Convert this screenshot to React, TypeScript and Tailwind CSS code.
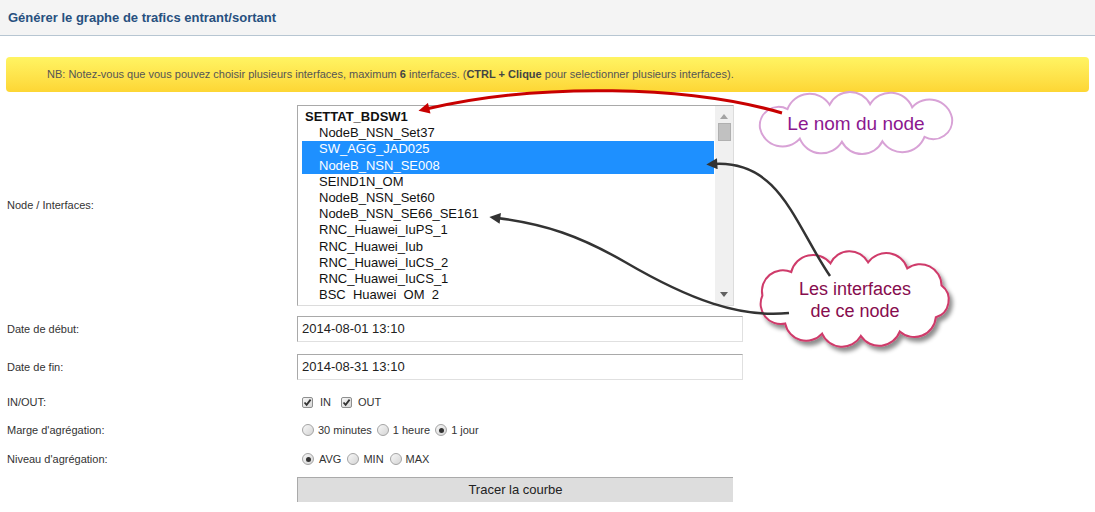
import React from 'react';

const interfaces = [
  'NodeB_NSN_Set37',
  'SW_AGG_JAD025',
  'NodeB_NSN_SE008',
  'SEIND1N_OM',
  'NodeB_NSN_Set60',
  'NodeB_NSN_SE66_SE161',
  'RNC_Huawei_IuPS_1',
  'RNC_Huawei_Iub',
  'RNC_Huawei_IuCS_2',
  'RNC_Huawei_IuCS_1',
  'BSC_Huawei_OM_2',
];
const selected = ['SW_AGG_JAD025', 'NodeB_NSN_SE008'];

// scalloped cloud outline: points spaced evenly along an ellipse, joined by outward arcs
function cloudPath(cx: number, cy: number, rx: number, ry: number, n: number, k: number) {
  const samples: [number, number][] = [];
  const lens = [0];
  for (let i = 0; i <= 400; i++) {
    const a = -Math.PI / 2 + (i / 400) * Math.PI * 2;
    samples.push([cx + rx * Math.cos(a), cy + ry * Math.sin(a)]);
    if (i > 0) {
      const [x0, y0] = samples[i - 1];
      const [x1, y1] = samples[i];
      lens.push(lens[i - 1] + Math.hypot(x1 - x0, y1 - y0));
    }
  }
  const total = lens[lens.length - 1];
  const pts: [number, number][] = [];
  let j = 0;
  for (let i = 0; i < n; i++) {
    const target = (i / n) * total + total / (n * 3);
    while (lens[j] < target) j++;
    pts.push(samples[j]);
  }
  let d = `M ${pts[0][0].toFixed(1)} ${pts[0][1].toFixed(1)}`;
  for (let i = 0; i < n; i++) {
    const a = pts[i];
    const b = pts[(i + 1) % n];
    const r = Math.hypot(b[0] - a[0], b[1] - a[1]) * k;
    d += ` A ${r.toFixed(1)} ${r.toFixed(1)} 0 0 1 ${b[0].toFixed(1)} ${b[1].toFixed(1)}`;
  }
  return d + ' Z';
}

function Check() {
  return (
    <span className="w-[11px] h-[11px] border border-[#8e8f8f] rounded-[2px] bg-gradient-to-br from-[#f6f6f6] to-[#d8d8d8] flex items-center justify-center">
      <svg width="9" height="9" viewBox="0 0 9 9">
        <path d="M1.5 4.5 L3.6 6.8 L7.6 1.6" fill="none" stroke="#333" strokeWidth="1.8" />
      </svg>
    </span>
  );
}

function Radio({ on }: { on?: boolean }) {
  return (
    <span className="w-[12px] h-[12px] rounded-full border border-[#a4a4a4] bg-gradient-to-br from-[#f7f7f7] to-[#d5d5d5] flex items-center justify-center">
      {on && <span className="w-[5px] h-[5px] rounded-full bg-[#333]" />}
    </span>
  );
}

function Row({ label, className, children }: { label: string; className: string; children: React.ReactNode }) {
  return (
    <div className={`flex items-center ${className}`}>
      <div className="w-[297px] pl-[7px] text-[11px] text-[#333]">{label}</div>
      {children}
    </div>
  );
}

export default function App() {
  return (
    <div className="relative w-[1095px] h-[512px] overflow-hidden bg-white font-['Liberation_Sans',Arial,sans-serif]">
      <div className="h-[36px] bg-[#f4f4f4] border-b border-[#b7c6d2] flex items-center pl-[8px]">
        <h1 className="text-[13px] font-bold text-[#27507f]">Générer le graphe de trafics entrant/sortant</h1>
      </div>

      <div className="mx-[6px] mt-[21px] h-[35px] rounded-[4px] bg-gradient-to-b from-[#fff462] to-[#fdd634] flex items-center pl-[41px] text-[11px] text-[#555]">
        <span>
          NB: Notez-vous que vous pouvez choisir plusieurs interfaces, maximum <b className="text-[#444]">6</b> interfaces. (
          <b className="text-[#444]">CTRL + Clique</b> pour selectionner plusieurs interfaces).
        </span>
      </div>

      <Row label="Node / Interfaces:" className="mt-[13px]">
        <div className="w-[437px] h-[201px] border border-[#a9a9a9] border-r-[#dcdcdc] border-b-[#dcdcdc] flex">
          <div className="flex-1 pl-[4px] pr-[1px] pt-[3px]">
            <div className="h-[191px] overflow-hidden text-[13px] text-[#111]">
              <div className="h-[16.2px] leading-[16px] pl-[3px] font-bold">SETTAT_BDSW1</div>
              {interfaces.map((name) => (
                <div
                  key={name}
                  className={`h-[16.2px] leading-[16.2px] pl-[17px] ${selected.includes(name) ? 'bg-[#1e90ff] text-white' : ''}`}
                >
                  {name}
                </div>
              ))}
            </div>
          </div>
          <div className="w-[18px] bg-[#f0f0f0] flex flex-col items-center">
            <svg width="8" height="5" viewBox="0 0 8 5" className="mt-[8px]">
              <path d="M0 5 L4 0 L8 5 Z" fill="#a3a3a3" />
            </svg>
            <div className="mt-[4px] w-[13px] h-[18px] bg-[#c1c1c1] border border-[#b0b0b0]" />
            <div className="flex-1" />
            <svg width="8" height="5" viewBox="0 0 8 5" className="mb-[8px]">
              <path d="M0 0 L8 0 L4 5 Z" fill="#606060" />
            </svg>
          </div>
        </div>
      </Row>

      <Row label="Date de début:" className="mt-[10px]">
        <div className="w-[446px] h-[26px] border border-[#a9a9a9] border-r-[#e0e0e0] border-b-[#e0e0e0] pl-[4px] flex items-center text-[13px] text-[#222]">
          2014-08-01 13:10
        </div>
      </Row>

      <Row label="Date de fin:" className="mt-[12px]">
        <div className="w-[446px] h-[26px] border border-[#a9a9a9] border-r-[#e0e0e0] border-b-[#e0e0e0] pl-[4px] flex items-center text-[13px] text-[#222]">
          2014-08-31 13:10
        </div>
      </Row>

      <Row label="IN/OUT:" className="mt-[11px] h-[22px]">
        <div className="flex items-center pl-[5px] text-[11px] text-[#333]">
          <Check />
          <span className="ml-[7px] mr-[10px]">IN</span>
          <Check />
          <span className="ml-[6px]">OUT</span>
        </div>
      </Row>

      <Row label="Marge d'agrégation:" className="mt-[6px] h-[22px]">
        <div className="flex items-center pl-[5px] text-[11px] text-[#333]">
          <Radio />
          <span className="ml-[4px] mr-[5px]">30 minutes</span>
          <Radio />
          <span className="ml-[4px] mr-[5px]">1 heure</span>
          <Radio on />
          <span className="ml-[4px]">1 jour</span>
        </div>
      </Row>

      <Row label="Niveau d'agrégation:" className="mt-[7px] h-[22px]">
        <div className="flex items-center pl-[5px] text-[11px] text-[#333]">
          <Radio on />
          <span className="ml-[5px] mr-[6px]">AVG</span>
          <Radio />
          <span className="ml-[4px] mr-[6px]">MIN</span>
          <Radio />
          <span className="ml-[4px]">MAX</span>
        </div>
      </Row>

      <div className="flex mt-[7px]">
        <div className="w-[297px]" />
        <button className="w-[436px] h-[25px] bg-[#dddddd] border-t border-l border-[#aaaaaa] text-[13px] text-[#222]">
          Tracer la courbe
        </button>
      </div>

      {/* annotations */}
      <svg className="absolute inset-0 pointer-events-none" width="1095" height="512">
        <defs>
          <filter id="shadow" x="-10%" y="-10%" width="130%" height="140%">
            <feDropShadow dx="3" dy="4" stdDeviation="2" floodColor="#000" floodOpacity="0.45" />
          </filter>
          <marker id="redHead" viewBox="0 0 10 10" refX="3" refY="5" markerWidth="14" markerHeight="11" markerUnits="userSpaceOnUse" orient="auto">
            <path d="M0 0 L10 5 L0 10 Z" fill="#c80000" />
          </marker>
          <marker id="darkHead" viewBox="0 0 10 10" refX="3" refY="5" markerWidth="14" markerHeight="11" markerUnits="userSpaceOnUse" orient="auto">
            <path d="M0 0 L10 5 L0 10 Z" fill="#333" />
          </marker>
        </defs>
        <path d={cloudPath(856, 123, 100, 19, 10, 0.56)} fill="#fff" stroke="#d8a2d6" strokeWidth="2" />
        <path d={cloudPath(855, 299, 93, 37, 11, 0.56)} fill="#fff" stroke="#cf3b6b" strokeWidth="2" filter="url(#shadow)" />
        <path d="M 782 113 C 690 86, 540 82, 426 109" fill="none" stroke="#c80000" strokeWidth="3" markerEnd="url(#redHead)" />
        <path d="M 830 276 C 795 225, 780 160, 714 164" fill="none" stroke="#333" strokeWidth="2.5" markerEnd="url(#darkHead)" />
        <path d="M 789 313 C 740 318, 690 300, 625 262 C 580 236, 545 224, 497 218" fill="none" stroke="#333" strokeWidth="2.5" markerEnd="url(#darkHead)" />
      </svg>

      <div className="absolute left-[756px] top-[111px] w-[200px] text-center text-[19px] leading-[26px] text-[#8c178f]">
        Le nom du node
      </div>
      <div className="absolute left-[755px] top-[278px] w-[200px] text-center text-[18px] leading-[22px] text-[#870d4e]">
        Les interfaces
        <br />
        de ce node
      </div>
    </div>
  );
}
